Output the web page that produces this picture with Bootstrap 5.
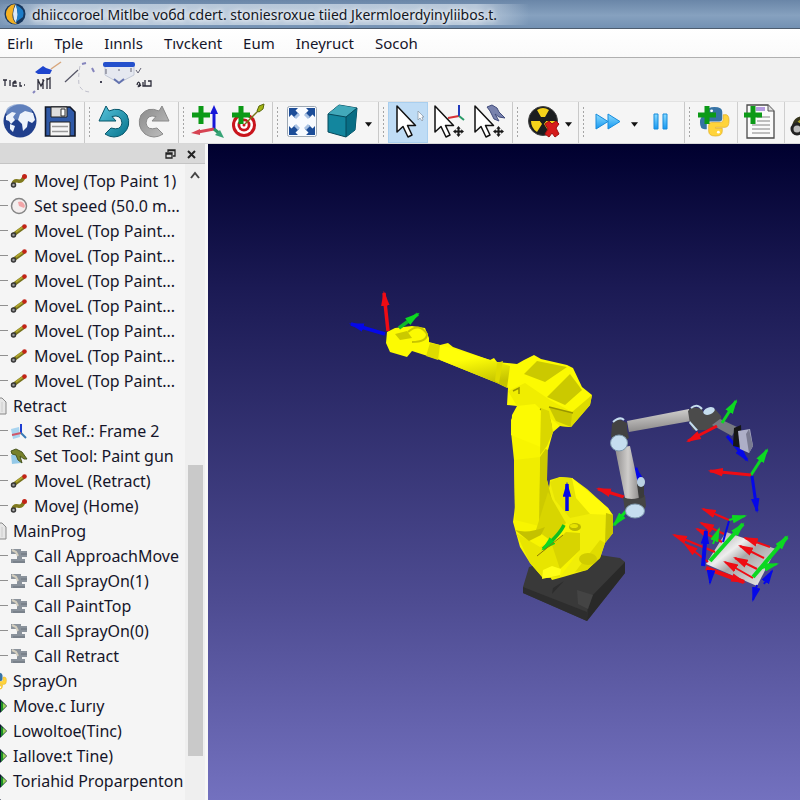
<!DOCTYPE html>
<html lang="en">
<head>
<meta charset="utf-8">
<meta name="viewport" content="width=device-width, initial-scale=1">
<title>Robot station</title>
<link href="https://cdn.jsdelivr.net/npm/bootstrap@5.3.0/dist/css/bootstrap.min.css" rel="stylesheet">
<style>
body{font-family:"Noto Sans","Open Sans",sans-serif;background:#f0f0f0;color:#15152a;font-size:16px}
.titlebar{height:29px;background:linear-gradient(180deg,#6a86a8,#86a1bf 55%,#7391b3);border-bottom:1px solid #4d5c6e;font-size:14px;color:#12161e}
.titlebar span{background:linear-gradient(90deg,#d3deea00,#c9d6e4cc 10%,#c9d6e4cc 90%,#d3deea00);padding:0 32px;margin-left:-26px;text-shadow:0 0 4px #fff,0 0 6px #fff}
.menus{height:29px;background:linear-gradient(#fff,#fafafa);border-bottom:1px solid #b0b0b0;padding-left:7px;gap:21px;font-size:15px}
.menus button,.tools button,.dockbar button{border:0;background:none;padding:0;color:inherit;white-space:nowrap}
.quickbar{height:43px;background:#f0f0f0;padding-left:2px}
.tools{height:43px;background:#f5f5f5;border-top:1px solid #e2e2e2;border-bottom:1px solid #d8d8d8}
.toolset{border-right:1px solid #c9c9c9;padding-right:4px}
.grip{width:9px;margin:4px 0;background:radial-gradient(circle,#a5a5a5 1px,#a5a5a500 1px) 0 0/9px 4px}
.tools .tool{width:40px;padding-bottom:3px}
.tools .tool svg{width:36px;height:36px}
.tools .caret{width:12px}
.tools .active{background:#bfdcf5;box-shadow:inset 0 0 0 1px #a9cfef}
.rule{width:1px;background:#cfcfcf;margin:0 3px}
.dock{width:208px;border-right:3px solid #f7f7f7}
.dockbar{height:20px;background:#d9d9d9;border-bottom:1px solid #c4c4c4;gap:8px;padding-right:6px}
.tree{padding-top:4px;background:#f5f5f5}
.tree li{height:25px;gap:6px;white-space:nowrap}
.tree li.leaf::before{content:"";width:8px;height:1px;background:#909090;margin-right:-4px}
.tree svg{width:18px;height:18px}
.tree .node{gap:6px;margin-left:-11px}
.scroller{width:20px;background:#efefef}
.thumb{margin-top:283px;height:291px;width:15px;background:#c9c9c9}
</style>
</head>
<body>
<svg width="0" height="0" class="position-absolute" aria-hidden="true">
<defs>
<linearGradient id="teal" x1="0" y1="0" x2="1" y2="1"><stop offset="0" stop-color="#58c4dc"/><stop offset="1" stop-color="#05738c"/></linearGradient>
<linearGradient id="grey" x1="0" y1="0" x2="1" y2="1"><stop offset="0" stop-color="#888"/><stop offset="1" stop-color="#c2c2c2"/></linearGradient>
<linearGradient id="sky" x1="0" y1="0" x2="0" y2="1"><stop offset="0" stop-color="#8bdcff"/><stop offset="1" stop-color="#1597f0"/></linearGradient>
<symbol id="movel" viewBox="0 0 18 18"><path d="M3 13L14 5" stroke="#77721c" stroke-width="4"/><path d="M6 10L13 5" stroke="#b0a52c" stroke-width="2"/><circle cx="3.500" cy="13" r="2" fill="#999" stroke="#383838" stroke-width="1.500"/><circle cx="14.500" cy="4.500" r="2.300" fill="#c22318"/></symbol>
<symbol id="movej" viewBox="0 0 18 18"><path d="M3 12Q4 8 8 9T14 5" fill="none" stroke="#807a1e" stroke-width="3.500"/><circle cx="3.500" cy="13" r="2" fill="#aaa" stroke="#383838" stroke-width="1.500"/><circle cx="14.500" cy="4.500" r="2.500" fill="#c22318"/></symbol>
<symbol id="call" viewBox="0 0 18 18"><path d="M1 2H11V4H17V10H12V12H15V16H1V12H7V7H1Z" fill="#8b939c"/><path d="M2 3L6 5L8 9" stroke="#d5cfbf" stroke-width="2" fill="none"/><path d="M11 7H17M3 15H15" stroke="#69717a"/></symbol>
<symbol id="page" viewBox="0 0 18 18"><path d="M2 1H13L17 5V17H2Z" fill="#e6e6e6" stroke="#888"/><path d="M13 5V15M10 4V15" stroke="#ccc"/></symbol>
<symbol id="python" viewBox="0 0 32 32"><path d="M10 16H21Q24 16 24 13V6Q24 1 16 1T9 6V9H17V10H6Q1 10 1 17T6 24H8V19Q8 16 10 16Z" fill="#3673a5"/><path d="M22 17H13Q10 17 10 20V26Q10 31 17 31T24 26V23H17V22H27Q31 22 31 15T26 9H25V14Q25 17 22 17Z" fill="#ffd43b" stroke="#e0ac20" stroke-width=".7"/><circle cx="13" cy="5" r="1.500" fill="#fff"/><circle cx="20" cy="27" r="1.500" fill="#fff"/></symbol>
<symbol id="target" viewBox="0 0 18 18"><path d="M9 0L18 9L9 18L0 9Z" fill="#0d1630"/><path d="M12 4L17 9L12 15Z" fill="#1d8f26"/><path d="M14 6L17.500 9L14 12Z" fill="#9ad05a"/></symbol>
<symbol id="cursor" viewBox="0 0 36 36"><path d="M7 3V29L13 23.500L18 34L22 32L17.500 22.500H25.500Z" fill="#fff" stroke="#111" stroke-width="1.500" stroke-linejoin="round"/></symbol>
<symbol id="fourway" viewBox="0 0 10 10"><path d="M5 0L7 2.500H5.900V4.100H7.500V3L10 5L7.500 7V5.900H5.900V7.500H7L5 10L3 7.500H4.100V5.900H2.500V7L0 5L2.500 3V4.100H4.100V2.500H3Z" fill="#1a1a1a"/></symbol>
<symbol id="plus" viewBox="0 0 18 18"><path d="M6.500 0H11.500V6.500H18V11.500H11.500V18H6.500V11.500H0V6.500H6.500Z" fill="#0c9a17"/></symbol>
<symbol id="drop" viewBox="0 0 8 5"><path d="M0 0H8L4 5Z" fill="#111"/></symbol>
</defs>
</svg>
<div class="d-flex flex-column vh-100 overflow-hidden">
<header class="titlebar d-flex align-items-center flex-shrink-0 ps-1 overflow-hidden">
<svg width="22" height="22" viewBox="0 0 22 22" class="flex-shrink-0 position-relative z-1" aria-hidden="true"><circle cx="11" cy="11" r="10.500" fill="#17365d"/><path d="M11 1A10 10 0 1 0 13 21Q5 16 11 1Z" fill="#f4b123"/><path d="M12 1Q6 12 12 20L14 12Z" fill="#dceaf7"/><path d="M12 2Q22 6 19 14L12 19Q15 11 12 2Z" fill="#1d7cc7"/></svg>
<span class="text-nowrap">dhiiccoroel Mitlbe voбd cdert. stoniesroxue tiied Jkermloerdyinyliibos.t.</span>
</header>
<nav class="menus d-flex align-items-center flex-shrink-0" aria-label="Main menu">
<button type="button">Eirlı</button><button type="button">Tple</button><button type="button">Iınnls</button><button type="button">Tıvckent</button><button type="button">Eum</button><button type="button">Ineyruct</button><button type="button">Socoh</button>
</nav>
<div class="quickbar flex-shrink-0">
<svg width="160" height="40" viewBox="0 0 160 40" aria-hidden="true"><g fill="none" stroke="#2b2b38" stroke-width="1.300"><path d="M1 22H5M3 22V28M8 22V28M11 25Q14 21 14 25H11V28H15M18 24V28H20M22 27H23M36 21V32M41 21V31M36 22L39 28L42 22M45 20V31M45 22L48 20V31M135 27Q136 22 138 26Q134 31 139 27M141 24V28H145M143 22V28M146 23H149V28H145"/></g><path d="M33 14L41 8L44 10L50 12L48 16H36Z" fill="#1e45ce"/><path d="M49 11L59 4" stroke="#d7a67c" stroke-width="1.500"/><path d="M31 35L33 33M80 6L84 5M90 10L92 14" stroke="#8585bd" stroke-width="2"/><path d="M63 24L76 12" stroke="#556" stroke-width="1.200"/><path d="M78 8Q76 18 77 27Q80 34 89 34" fill="none" stroke="#c0c0cc" stroke-dasharray="4 3"/><path d="M103 7H132V17L117 25L103 17Z" fill="#e5e8f0" stroke="#c2c8d6"/><rect x="101" y="4" width="32" height="5" rx="2" fill="#2450cc"/><path d="M104 11V16M116 12H118M129 10V14M134 12L136 15L139 10" stroke="#667" fill="none"/><path d="M112 21L117 25L122 21" stroke="#6473af" stroke-width="2" fill="none"/><path d="M98 24H100" stroke="#445" stroke-width="2"/></svg>
</div>
<div class="tools d-flex flex-shrink-0 overflow-hidden" role="toolbar" aria-label="Tools">
<div class="toolset d-flex flex-shrink-0">
<button type="button" class="tool" aria-label="Library"><svg viewBox="0 0 36 36"><circle cx="18" cy="18" r="16.500" fill="#21408d"/><ellipse cx="17" cy="9" rx="13" ry="8" fill="#7c9bd0" opacity=".7"/><path d="M4 13L10 9L14 10L11 14L13 17L9 21L7 18L4 17ZM8 21L13 23L11 29L8 26ZM18 11L23 8L31 10L33 17L30 20L26 18L25 24L21 28L20 21L16 17Z" fill="#eef3fb"/></svg></button>
<button type="button" class="tool" aria-label="Save"><svg viewBox="0 0 36 36"><path d="M3.500 4H28L33 9V33H3.500Z" fill="#2f59a7" stroke="#121827" stroke-width="1.600"/><path d="M9 4H25V14H9Z" fill="#ddd" stroke="#222"/><path d="M19 6H23V13H19Z" fill="#fff" stroke="#333"/><path d="M8 19H28V33H8Z" fill="#f6f6f6" stroke="#222"/><path d="M10 23.500H26M10 28.500H26" stroke="#999" stroke-width="1.500"/></svg></button>
</div>
<div class="toolset d-flex flex-shrink-0"><span class="grip"></span>
<button type="button" class="tool" aria-label="Undo"><svg viewBox="0 0 36 36"><path d="M10 3L3 18L20 18L16 13.500Q25 11 26 20Q25 28 15 25L9 31Q18 37 27 31Q36 23 31 12Q24 3 13 8Z" fill="url(#teal)" stroke="#07566b" stroke-width="1"/></svg></button>
<button type="button" class="tool" aria-label="Redo"><svg viewBox="0 0 36 36"><path d="M26 3L33 18L16 18L20 13.500Q11 11 10 20Q11 28 21 25L27 31Q18 37 9 31Q0 23 5 12Q12 3 23 8Z" fill="url(#grey)" stroke="#8a8a8a" stroke-width="1"/></svg></button>
</div>
<div class="toolset d-flex flex-shrink-0"><span class="grip"></span>
<button type="button" class="tool" aria-label="Add frame"><svg viewBox="0 0 36 36"><path d="M24 27V8" stroke="#1717d8" stroke-width="3"/><path d="M24 2L28 11H20Z" fill="#1717d8"/><path d="M24 26L8 29" stroke="#d64352" stroke-width="3"/><path d="M1 30L10 26V32Z" fill="#d64352"/><path d="M24 26L30 31" stroke="#2a9563" stroke-width="3"/><path d="M34 35L25 32L30 27Z" fill="#37a477"/><use href="#plus" x="2" y="3" width="18" height="18"/></svg></button>
<button type="button" class="tool" aria-label="Add target"><svg viewBox="0 0 36 36"><circle cx="14" cy="22" r="12" fill="#c9151d"/><circle cx="14" cy="22" r="9" fill="#fff"/><circle cx="14" cy="22" r="6.500" fill="#c9151d"/><circle cx="14" cy="22" r="3.700" fill="#fff"/><circle cx="14" cy="22" r="1.500" fill="#c9151d"/><path d="M15 21L30 6" stroke="#777419" stroke-width="1.500"/><path d="M27 8L29 3L34 1L33 6L29 9Z" fill="#a3b514" stroke="#59680c"/><use href="#plus" x="2" y="3" width="18" height="18"/></svg></button>
</div>
<div class="toolset d-flex flex-shrink-0"><span class="grip"></span>
<button type="button" class="tool" aria-label="Fit all"><svg viewBox="0 0 36 36"><rect x="3.500" y="3.500" width="29" height="30" rx="2" fill="#f8fbff" stroke="#9da8b3"/><g fill="#1c4d98"><path id="corner" d="M5 5H14L11.500 7.500L15 11L11 15L7.500 11.500L5 14Z"/><use href="#corner" transform="matrix(-1 0 0 1 36 0)"/><use href="#corner" transform="matrix(1 0 0 -1 0 37)"/><use href="#corner" transform="matrix(-1 0 0 -1 36 37)"/></g><path d="M15 11L11 15M21 11L25 15M15 26L11 22M21 26L25 22" stroke="#a9c3e4" stroke-width="3"/></svg></button>
<button type="button" class="tool" aria-label="Isometric view"><svg viewBox="0 0 36 36"><path d="M4 11L15 2L33 5L31 27L22 34L4 29Z" fill="#13869e" stroke="#06485a"/><path d="M4 11L15 2L33 5L22 14Z" fill="#42a9ba"/><path d="M22 14L33 5L31 27L22 34Z" fill="#086d84"/><path d="M4 11L22 14L33 5M22 14V34" fill="none" stroke="#06485a"/></svg></button>
<button type="button" class="caret" aria-label="View options"><svg width="7" height="5"><use href="#drop"/></svg></button>
</div>
<div class="toolset d-flex flex-shrink-0"><span class="grip"></span>
<button type="button" class="tool active" aria-label="Select"><svg viewBox="0 0 36 36"><use href="#cursor"/><path d="M28 8V17L30 15L32 18L33 17L32 14H34Z" fill="#f7fafd" stroke="#8592a0" stroke-width=".7"/></svg></button>
<button type="button" class="tool" aria-label="Move frame"><svg viewBox="0 0 36 36"><path d="M29 13L18 15" stroke="#d83236" stroke-width="2"/><path d="M29 13V2" stroke="#203abc" stroke-width="2"/><path d="M29 13L34 17" stroke="#289a67" stroke-width="2"/><use href="#cursor" x="-2"/><use href="#fourway" x="23" y="23" width="11" height="11"/></svg></button>
<button type="button" class="tool" aria-label="Move tool"><svg viewBox="0 0 36 36"><path d="M17 4L22 2L27 5L29 9L35 15L29 14L25 11L29 18L24 16L20 8Z" fill="#7882ad" stroke="#424d7d"/><use href="#cursor" x="-2"/><use href="#fourway" x="23" y="23" width="11" height="11"/></svg></button>
</div>
<div class="toolset d-flex flex-shrink-0"><span class="grip"></span>
<button type="button" class="tool" aria-label="Check collisions"><svg viewBox="0 0 36 36"><circle cx="19" cy="18" r="14.500" fill="#1b1d1f" stroke="#444"/><path d="M17 14L13 7Q19 3 25 7L21 14ZM16 18H7Q7 25 13 29L18 21ZM22 18H31Q31 25 25 29L20 21Z" fill="#f4d21a"/><circle cx="19" cy="17" r="3" fill="#1b1d1f"/><path d="M21 21L25 18L28 21L32 18L35 21L32 25L35 31L31 34L28 30L25 34L21 31L24 26Z" fill="#d51b1b" stroke="#a20f0f"/></svg></button>
<button type="button" class="caret" aria-label="Collision options"><svg width="7" height="5"><use href="#drop"/></svg></button>
</div>
<div class="toolset d-flex flex-shrink-0"><span class="grip"></span>
<button type="button" class="tool" aria-label="Fast simulation"><svg viewBox="0 0 36 36"><path d="M6 11L18 18.500L6 26ZM18 11L30 18.500L18 26Z" fill="url(#sky)" stroke="#168bdc"/></svg></button>
<button type="button" class="caret" aria-label="Speed options"><svg width="7" height="5"><use href="#drop"/></svg></button>
<button type="button" class="tool" aria-label="Pause"><svg viewBox="0 0 36 36"><path d="M12 11H16V26H12ZM21 11H25V26H21Z" fill="url(#sky)" stroke="#168bdc"/></svg></button>
</div>
<div class="d-flex flex-shrink-0"><span class="grip"></span>
<button type="button" class="tool" aria-label="Add Python program"><svg viewBox="0 0 36 36"><use href="#python" x="3" y="3" width="31" height="31"/><use href="#plus" x="2" y="3" width="18" height="18"/></svg></button>
<span class="rule"></span>
<button type="button" class="tool" aria-label="Add program"><svg viewBox="0 0 36 36"><path d="M4 2H25L31 8V35H4Z" fill="#fafafa" stroke="#4b4b4b" stroke-width="1.300"/><path d="M25 2V8H31" fill="#ddd" stroke="#555"/><path d="M13 6H22" stroke="#b49be0" stroke-width="4"/><path d="M14 14H27M14 18H27M9 22H27M9 26H27M9 30H27" stroke="#aaa" stroke-width="1.500"/><use href="#plus" x="1" y="3" width="18" height="18"/></svg></button>
<span class="rule"></span>
<button type="button" class="tool" aria-label="Move instruction"><svg viewBox="0 0 36 36"><path d="M6 24Q7 15 17 18T34 8" fill="none" stroke="#36351d" stroke-width="8"/><path d="M9 20Q13 16 19 17T34 8" fill="none" stroke="#a8a02c" stroke-width="4"/><circle cx="7" cy="26" r="5" fill="#bbb" stroke="#222" stroke-width="3"/></svg></button>
</div>
</div>
<main class="d-flex flex-grow-1 overflow-hidden">
<aside class="dock d-flex flex-column flex-shrink-0 overflow-hidden">
<div class="dockbar d-flex justify-content-end align-items-center flex-shrink-0">
<button type="button" class="d-flex" aria-label="Float panel"><svg width="14" height="14" viewBox="0 0 14 14" fill="none" stroke="#222" stroke-width="1.300"><path d="M5 5V3H12V9H10M3 6H9V11H3ZM3 7H9M5 3.500H12"/></svg></button>
<button type="button" class="d-flex" aria-label="Close panel"><svg width="14" height="14" viewBox="0 0 14 14"><path d="M3 4L10 11M10 4L3 11" stroke="#222" stroke-width="2"/></svg></button>
</div>
<div class="d-flex flex-grow-1 overflow-hidden">
<ul class="tree list-unstyled mb-0 flex-grow-1 overflow-hidden">
<li class="leaf d-flex align-items-center"><svg><use href="#movej"/></svg>MoveJ (Top Paint 1)</li>
<li class="leaf d-flex align-items-center"><svg viewBox="0 0 18 18"><circle cx="9" cy="9" r="7.500" fill="#f3eeee" stroke="#858585" stroke-width="1.500"/><path d="M9 9L8 5Q13 3 15 9L14 11Z" fill="#f2a5a8"/></svg>Set speed (50.0 m...</li>
<li class="leaf d-flex align-items-center"><svg><use href="#movel"/></svg>MoveL (Top Paint...</li>
<li class="leaf d-flex align-items-center"><svg><use href="#movel"/></svg>MoveL (Top Paint...</li>
<li class="leaf d-flex align-items-center"><svg><use href="#movel"/></svg>MoveL (Top Paint...</li>
<li class="leaf d-flex align-items-center"><svg><use href="#movel"/></svg>MoveL (Top Paint...</li>
<li class="leaf d-flex align-items-center"><svg><use href="#movel"/></svg>MoveL (Top Paint...</li>
<li class="leaf d-flex align-items-center"><svg><use href="#movel"/></svg>MoveL (Top Paint...</li>
<li class="leaf d-flex align-items-center"><svg><use href="#movel"/></svg>MoveL (Top Paint...</li>
<li class="node d-flex align-items-center"><svg><use href="#page"/></svg>Retract</li>
<li class="leaf d-flex align-items-center"><svg viewBox="0 0 18 18"><path d="M1 7L9 5L10 15L3 17Z" fill="#a8d4f0"/><path d="M11 11V2" stroke="#1d3dd2" stroke-width="2"/><path d="M11 11L2 13" stroke="#d05668" stroke-width="2"/><path d="M11 11L16 16" stroke="#397ab5" stroke-width="2"/></svg>Set Ref.: Frame 2</li>
<li class="leaf d-flex align-items-center"><svg viewBox="0 0 18 18"><path d="M1 8L10 6L11 16L2 17Z" fill="#94c9e8"/><path d="M1 4L6 2L12 5L17 12L14 12L10 9L12 16L8 13L6 8L2 7Z" fill="#77812b" stroke="#49551e"/></svg>Set Tool: Paint gun</li>
<li class="leaf d-flex align-items-center"><svg><use href="#movel"/></svg>MoveL (Retract)</li>
<li class="leaf d-flex align-items-center"><svg><use href="#movej"/></svg>MoveJ (Home)</li>
<li class="node d-flex align-items-center"><svg><use href="#page"/></svg>MainProg</li>
<li class="leaf d-flex align-items-center"><svg><use href="#call"/></svg>Call ApproachMove</li>
<li class="leaf d-flex align-items-center"><svg><use href="#call"/></svg>Call SprayOn(1)</li>
<li class="leaf d-flex align-items-center"><svg><use href="#call"/></svg>Call PaintTop</li>
<li class="leaf d-flex align-items-center"><svg><use href="#call"/></svg>Call SprayOn(0)</li>
<li class="leaf d-flex align-items-center"><svg><use href="#call"/></svg>Call Retract</li>
<li class="node d-flex align-items-center"><svg><use href="#python"/></svg>SprayOn</li>
<li class="node d-flex align-items-center"><svg><use href="#target"/></svg>Move.c Iurıy</li>
<li class="node d-flex align-items-center"><svg><use href="#target"/></svg>Lowoltoe(Tinc)</li>
<li class="node d-flex align-items-center"><svg><use href="#target"/></svg>Iallove:t Tine)</li>
<li class="node d-flex align-items-center"><svg><use href="#target"/></svg>Toriahid Proparpenton</li>
<li class="node d-flex align-items-center"><svg><use href="#target"/></svg>Lowoltoe (Iloc)</li>
</ul>
<div class="scroller flex-shrink-0 d-flex flex-column align-items-center">
<svg width="10" height="18" viewBox="0 0 10 18" class="flex-shrink-0"><path d="M1 14L5 9L9 14" fill="none" stroke="#444" stroke-width="2"/></svg>
<div class="thumb flex-shrink-0"></div>
</div>
</div>
</aside>
<section class="flex-grow-1 overflow-hidden" aria-label="3D view">
<svg class="d-block w-100 h-100" viewBox="208 144 592 656" preserveAspectRatio="xMinYMin slice">
<defs>
<linearGradient id="space" x1="0" y1="0" x2="0" y2="1"><stop offset="0" stop-color="#00002f"/><stop offset=".22" stop-color="#1b1a54"/><stop offset=".7" stop-color="#4e4c92"/><stop offset="1" stop-color="#7371bf"/></linearGradient>
<linearGradient id="tubeA" x1="0" y1="0" x2="0.200" y2="1"><stop offset="0" stop-color="#dddcda"/><stop offset="1" stop-color="#8b8989"/></linearGradient>
<linearGradient id="tubeB" x1="0" y1="0" x2="1" y2="0"><stop offset="0" stop-color="#8e8c8c"/><stop offset=".5" stop-color="#cfcdcb"/><stop offset="1" stop-color="#858383"/></linearGradient>
<linearGradient id="plate" x1="0" y1="0" x2="1" y2="1"><stop offset="0" stop-color="#8f8f8f"/><stop offset=".35" stop-color="#eee"/><stop offset=".5" stop-color="#a8a8a8"/><stop offset="1" stop-color="#f5f5f5"/></linearGradient>
<linearGradient id="limb" x1="0" y1="0" x2="0.300" y2="1"><stop offset=".4" stop-color="#ffff08"/><stop offset="1" stop-color="#c6c400"/></linearGradient>
<marker id="mr" viewBox="0 0 14 8" refX="12" refY="4" markerWidth="15" markerHeight="9" markerUnits="userSpaceOnUse" orient="auto"><path d="M0 0L14 4L0 8Z" fill="#ee0c14"/></marker>
<marker id="mg" viewBox="0 0 14 8" refX="12" refY="4" markerWidth="15" markerHeight="9" markerUnits="userSpaceOnUse" orient="auto"><path d="M0 0L14 4L0 8Z" fill="#0cd822"/></marker>
<marker id="mb" viewBox="0 0 14 8" refX="12" refY="4" markerWidth="15" markerHeight="9" markerUnits="userSpaceOnUse" orient="auto"><path d="M0 0L14 4L0 8Z" fill="#0508e8"/></marker>
</defs>
<rect x="208" y="144" width="592" height="656" fill="url(#space)"/>
<path d="M529 567L523 587V593L587 621L625 573V562L620 558L613 557L580 552Z" fill="#393939"/>
<path d="M587 621L625 573V562L588 600Z" fill="#292929"/><path d="M523 587V593L587 621V612ZM552 594L564 581L553 588Z" fill="#2d2d2d"/><path d="M577 590L593 595L588 609L578 604Z" fill="#444"/>
<path d="M550 480L560 477L572 478L587 489L608 508L613 515V533L605 543L600 558L587 570L563 577L552 580L540 560Z" fill="#f1ee08"/>
<path d="M550 482L560 477L572 478L608 510L570 518L555 500Z" fill="#e6e304"/><path d="M572 478L608 508L612 515L590 514L576 498Z" fill="#fffb0a"/>
<path d="M606 513L613 515V533L605 543Z" fill="#c8c500"/><path d="M600 540L605 543L600 558L587 570L575 572Z" fill="#e0dc00"/>
<path d="M511 420L516 410L530 405L547 412L548 437L547 480L552 500L566 523L580 530V550L560 577L543 578L530 563L520 547L513 522L515 507L514 460L511 432Z" fill="#f8f500"/>
<path d="M540 457L547 447V480L552 500L542 530L538 522Z" fill="#cdca00"/><path d="M514 460L540 457L539 526L515 520Z" fill="#f0ed00"/><path d="M548 492L566 523L550 540L536 530Z" fill="#d8d500"/>
<path d="M516 533L540 547L552 540L560 549V577L543 578L530 563Z" fill="#e8e500"/><path d="M552 545L566 532L580 533V550L560 569Z" fill="#d8d400"/>
<path d="M515 530Q528 534 545 527L541 535L529 541Z" fill="#c4c100"/>
<ellipse cx="575" cy="527" rx="6" ry="4" fill="#bbb800"/><ellipse cx="574" cy="526" rx="4" ry="2" fill="#e8e500"/><ellipse cx="588" cy="559" rx="9" ry="6" fill="#d0cc00"/><path d="M542 579L560 575L561 569L552 566L543 570Z" fill="#ffff17"/>
<path d="M387 332L395 328L412 326L425 328L429 338V342L440 345L448 343L453 347L490 360L494 358L497 362L517 364L524 360L534 355L541 359L567 365L573 368L582 387L592 395L590 405L571 427L560 426L553 432L548 450L511 435L512 415L517 406L507 405L508 388L497 383L440 360L412 351L407 357L390 352L386 343Z" fill="#fcfa02"/>
<path d="M440 345L497 362L510 366L507 388L497 383L440 360Z" fill="url(#limb)"/>
<path d="M430 343L440 345L438 360L426 356ZM497 363L503 361L499 383L495 381Z" fill="#dedb00"/>
<path d="M395 334L407 331L412 338L400 340ZM524 374L537 361L567 367L545 382ZM547 397L570 374L582 390L565 405Z" fill="#cbc900"/><path d="M408 332Q419 322 427 334Q427 342 412 342" fill="none" stroke="#c8c500" stroke-width="2"/>
<path d="M508 391L525 383L550 400L572 412L571 427L560 426L550 418L535 404L517 406Z" fill="#f0ed00"/><path d="M549 407L573 413L571 427L556 421Z" fill="#cac800"/><path d="M572 412L592 395L590 405L571 427Z" fill="#dcda00"/>
<path d="M549 407L573 413M540 409Q552 414 551 433M513 391L519 388V394" fill="none" stroke="#999600" stroke-width="1.500"/><path d="M541 408L549 411L553 432L547 446L540 455Z" fill="#dad700"/>
<g fill="none" stroke-width="3.500"><path d="M388 331L384 293" stroke="#ee0c14" marker-end="url(#mr)"/><path d="M385 334L351 324" stroke="#0508e8" marker-end="url(#mb)"/><path d="M399 328L418 314" stroke="#10b829" marker-end="url(#mg)"/><path d="M567 511V484" stroke="#0508e8" marker-end="url(#mb)"/><path d="M564 525Q560 534 543 549" stroke="#10bd20" marker-end="url(#mg)"/></g>
<path d="M537 556L563 535" stroke="#8b7805"/>
<g fill="none" stroke-width="3"><path d="M640 482L636 468" stroke="#0508e8" marker-end="url(#mb)"/><path d="M624 497L598 489" stroke="#ee0c14" marker-end="url(#mr)"/><path d="M627 510L614 525" stroke="#0ce022" marker-end="url(#mg)"/></g>
<path d="M612 424L617 418L627 423V430L629 438L618 444L611 437Z" fill="#424242"/>
<path d="M627 421L689 409L691 421L629 432Z" fill="url(#tubeA)"/><path d="M615 448L630 446L641 498L626 503Z" fill="url(#tubeB)"/>
<path d="M623 497Q633 502 645 495L646 506L643 512L625 511Z" fill="#454545"/><path d="M637 484L644 481V497L639 499Z" fill="#3b3b3b"/>
<ellipse cx="619" cy="443" rx="8.500" ry="8" fill="#c5ddef" stroke="#7e99ad"/><ellipse cx="635" cy="511" rx="9.500" ry="7" fill="#c5ddef" stroke="#7e99ad"/><ellipse cx="641" cy="482" rx="4" ry="5" fill="#bad1e3"/><path d="M613 422Q620 416 624 420" fill="none" stroke="#c5ddef" stroke-width="2"/>
<path d="M688 411L692 407L702 409L704 414L715 409L721 416L722 424L706 430H693L690 424Z" fill="#4b4b4b"/><path d="M690 421L698 430L696 431L689 423Z" fill="#c5ddef"/><ellipse cx="709" cy="411" rx="6" ry="3.500" fill="#c5ddef" transform="rotate(-20 709 411)"/><path d="M691 408Q697 403 702 409" stroke="#c5ddef" stroke-width="2" fill="none"/>
<path d="M712 425L720 419L737 427L732 436Z" fill="#777982"/>
<path d="M727 436L747 460" fill="none" stroke="#0508e8" stroke-width="3" marker-end="url(#mb)"/>
<path d="M734 428L741 425L742 448L733 446Z" fill="#161616"/><path d="M738 431L750 429L753 446L749 453L740 449Z" fill="#adafc7"/><path d="M749 429L753 446L749 453L746 434Z" fill="#797b91"/>
<g fill="none" stroke-width="3"><g stroke="#0cd822"><path d="M722 423L736 401" marker-end="url(#mg)"/><path d="M751 475L767 450" marker-end="url(#mg)"/></g><g stroke="#ee0c14"><path d="M717 426L688 441" marker-end="url(#mr)"/><path d="M751 475L710 471" marker-end="url(#mr)"/></g><path d="M752 476L757 511" stroke="#0508e8" marker-end="url(#mb)"/></g>
<path d="M706 564L726 532L776 549L757 586Z" fill="url(#plate)"/>
<g fill="none" stroke-width="2"><g stroke="#ee0c14"><path d="M729 520L703 509" marker-end="url(#mr)"/><path d="M724 534L701 523" marker-end="url(#mr)"/><path d="M722 542L697 529" marker-end="url(#mr)"/><path d="M715 552L674 535" marker-end="url(#mr)"/><path d="M708 562L685 544" marker-end="url(#mr)"/><path d="M770 547L745 538" marker-end="url(#mr)"/><path d="M764 558L740 546" marker-end="url(#mr)"/><path d="M757 569L735 558" marker-end="url(#mr)"/><path d="M753 578L725 562" marker-end="url(#mr)"/><path d="M706 568L744 582" stroke-width="4" marker-end="url(#mr)"/></g><g stroke="#0cd822"><path d="M729 520L745 516" marker-end="url(#mg)"/><path d="M710 561L743 524" stroke-width="4" marker-end="url(#mg)"/><path d="M713 544L719 529" marker-end="url(#mg)"/><path d="M753 577L787 537" stroke-width="4" marker-end="url(#mg)"/><path d="M758 569L777 564" marker-end="url(#mg)"/></g><g stroke="#0508e8"><path d="M729 521L723 542"/><path d="M703 566L706 531" stroke-width="4" marker-end="url(#mb)"/><path d="M711 570L710 583" marker-end="url(#mb)"/><path d="M757 585L753 600" marker-end="url(#mb)"/><path d="M764 584L772 571" marker-end="url(#mb)"/></g></g>
</svg>
</section>
</main>
</div>
<script src="https://cdn.jsdelivr.net/npm/bootstrap@5.3.0/dist/js/bootstrap.bundle.min.js"></script>
</body>
</html>
